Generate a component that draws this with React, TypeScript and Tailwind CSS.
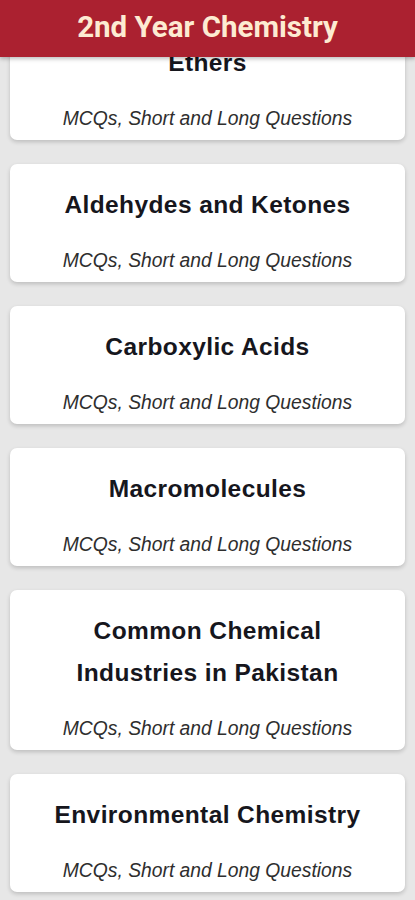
import React from "react";

const chapters = [
  "Ethers",
  "Aldehydes and Ketones",
  "Carboxylic Acids",
  "Macromolecules",
  "Common Chemical Industries in Pakistan",
  "Environmental Chemistry",
];

const ChapterCard = ({ title }: { title: string }) => {
  return (
    <div className="bg-white rounded-[7px] shadow-[0_2px_4px_rgba(0,0,0,0.18)] px-[40px] pt-[20px] pb-[10px] flex flex-col items-center text-center">
      <h2 className="font-['Liberation_Sans',Arial,sans-serif] font-bold text-[24.5px] leading-[42px] tracking-[0.4px] text-[#16161d]">
        {title}
      </h2>
      <p className="mt-[23px] font-['Liberation_Sans',Arial,sans-serif] italic text-[19.3px] leading-[23px] text-[#2e2e2e]">
        MCQs, Short and Long Questions
      </p>
    </div>
  );
};

export default function App() {
  return (
    <div className="relative min-h-[900px] bg-[#e7e7e7] overflow-hidden">
      <div className="absolute top-0 left-0 right-0 z-10 h-[57px] bg-[#ab2130] shadow-[0_2px_4px_rgba(0,0,0,0.25)] flex items-center justify-center pb-[2px]">
        <h1 className="font-['Roboto',sans-serif] font-bold text-[29.5px] text-[#fdebd2]">
          2nd Year Chemistry
        </h1>
      </div>
      <div className="flex flex-col gap-[24px] px-[10px] pt-[22px] pb-[20px] w-[415px]">
        {chapters.map((c) => (
          <ChapterCard key={c} title={c} />
        ))}
      </div>
    </div>
  );
}
